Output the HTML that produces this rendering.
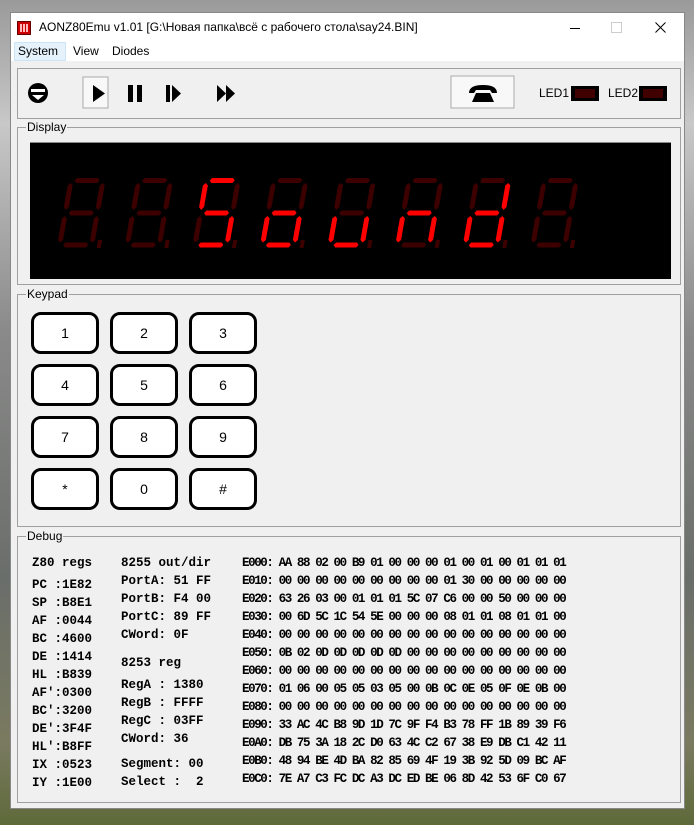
<!DOCTYPE html>
<html><head><meta charset="utf-8">
<style>
*{margin:0;padding:0;box-sizing:border-box}
body{width:694px;height:825px;overflow:hidden;position:relative;font-family:"Liberation Sans",sans-serif;
background:linear-gradient(180deg,#9a9a9a 0%,#c8c8c8 15%,#8a8a8a 40%,#6a6e6a 70%,#7a7a60 90%,#5e6a3a 100%);}
.a{position:absolute}
#win{left:10px;top:12px;width:675px;height:797px;background:#f0f0f0;border:1px solid #888;}
#title{left:0;top:0;width:673px;height:29px;background:#fff;font-size:12px;color:#000}
#menu{left:0;top:29px;width:673px;height:19px;background:#fff;font-size:12px}
.grp{position:absolute;border:1px solid #a0a0a0;}
.grp span.l{position:absolute;top:-8px;left:8px;background:#f0f0f0;font-size:12px;padding:0 1px;line-height:14px}
.key{position:absolute;width:68px;height:42px;border:3px solid #000;border-radius:10px;background:#fff;font-size:14px;text-align:center;line-height:36px;color:#000}
.m{font-family:"Liberation Mono","DejaVu Sans Mono",monospace;font-weight:bold;font-size:12.5px;color:#000;white-space:pre;position:absolute;line-height:18px}
.hex{font-size:12.5px;letter-spacing:-1.4px}
</style></head><body>
<div id="win" class="a">
 <div id="title" class="a">
  <div class="a" style="left:6px;top:8px;width:14px;height:14px;background:#c00;border:1px solid #600"></div>
  <div class="a" style="left:9px;top:11px;width:8px;height:8px;background:repeating-linear-gradient(90deg,#fbb 0 2px,#c00 2px 3px)"></div>
  <div class="a" style="left:28px;top:7px">AONZ80Emu v1.01 [G:\Новая папка\всё с рабочего стола\say24.BIN]</div>
  <div class="a" style="left:559px;top:15px;width:10px;height:1px;background:#000"></div>
  <div class="a" style="left:600px;top:9px;width:11px;height:11px;border:1px solid #ccc"></div>
  <svg class="a" style="left:644px;top:9px" width="11" height="11"><path d="M0.5 0.5L10.5 10.5M10.5 0.5L0.5 10.5" stroke="#000" stroke-width="1"/></svg>
 </div>
 <div id="menu" class="a">
  <div class="a" style="left:3px;top:0;width:52px;height:19px;background:#e5f1fb;border:1px solid #cce4f7"></div>
  <div class="a" style="left:7px;top:2px">System</div>
  <div class="a" style="left:62px;top:2px">View</div>
  <div class="a" style="left:101px;top:2px">Diodes</div>
 </div>
 <div class="grp" style="left:6px;top:55px;width:664px;height:51px">
  <svg class="a" style="left:0;top:0" width="664" height="51">
   <circle cx="20" cy="24" r="10" fill="#000"/>
   <rect x="13" y="20" width="14" height="3" fill="#fff"/>
   <polygon points="14,26 26,26 20,31" fill="#fff"/>
   <rect x="65" y="8" width="25" height="31" fill="#f8f8f8" stroke="#aaa"/>
   <polygon points="75,16 75,33 87,24.5" fill="#000"/>
   <rect x="110" y="16" width="5" height="17" fill="#000"/><rect x="119" y="16" width="5" height="17" fill="#000"/>
   <rect x="148" y="16" width="4" height="17" fill="#000"/><polygon points="154,16 154,33 163,24.5" fill="#000"/>
   <polygon points="199,16 199,33 208,24.5" fill="#000"/><polygon points="208,16 208,33 217,24.5" fill="#000"/>
   <rect x="433" y="7" width="63" height="32" fill="#f8f8f8" stroke="#aaa"/>
   <path d="M451 24 Q451 16 465 16 Q479 16 479 24 L474 24 L472 21 L458 21 L456 24 Z" fill="#000"/>
   <path d="M458 24 L472 24 L476 33 L454 33 Z" fill="#000"/>
  </svg>
  <div class="a" style="left:521px;top:17px;font-size:12px">LED1</div>
  <div class="a" style="left:553px;top:17px;width:28px;height:15px;background:#000;padding:3px 4px"><div style="width:20px;height:9px;background:#400000"></div></div>
  <div class="a" style="left:590px;top:17px;font-size:12px">LED2</div>
  <div class="a" style="left:621px;top:17px;width:28px;height:15px;background:#000;padding:3px 4px"><div style="width:20px;height:9px;background:#400000"></div></div>
 </div>
 <div class="grp" style="left:6px;top:114px;width:664px;height:158px"><span class="l">Display</span>
  <div class="a" style="left:12px;top:14px;width:641px;height:137px;background:#000;border-top:1px solid #888">
   <svg width="641" height="137" viewBox="0 0 641 137"><g id="digits"></g></svg>
  </div>
 </div>
 <div class="grp" style="left:6px;top:281px;width:664px;height:233px"><span class="l">Keypad</span>
  <div class="key" style="left:13px;top:17px">1</div><div class="key" style="left:92px;top:17px">2</div><div class="key" style="left:171px;top:17px">3</div>
  <div class="key" style="left:13px;top:69px">4</div><div class="key" style="left:92px;top:69px">5</div><div class="key" style="left:171px;top:69px">6</div>
  <div class="key" style="left:13px;top:121px">7</div><div class="key" style="left:92px;top:121px">8</div><div class="key" style="left:171px;top:121px">9</div>
  <div class="key" style="left:13px;top:173px">*</div><div class="key" style="left:92px;top:173px">0</div><div class="key" style="left:171px;top:173px">#</div>
 </div>
 <div class="grp" style="left:6px;top:523px;width:664px;height:267px"><span class="l">Debug</span>
  <div class="m" style="left:14px;top:17px">Z80 regs</div>
  <div class="m" style="left:14px;top:39px">PC :1E82
SP :B8E1
AF :0044
BC :4600
DE :1414
HL :B839
AF':0300
BC':3200
DE':3F4F
HL':B8FF
IX :0523
IY :1E00</div>
  <div class="m" style="left:103px;top:17px">8255 out/dir
PortA: 51 FF
PortB: F4 00
PortC: 89 FF
CWord: 0F</div>
  <div class="m" style="left:103px;top:117px">8253 reg</div>
  <div class="m" style="left:103px;top:139px">RegA : 1380
RegB : FFFF
RegC : 03FF
CWord: 36</div>
  <div class="m" style="left:103px;top:218px">Segment: 00
Select :  2</div>
  <div class="m hex" style="left:224px;top:17px">E000: AA 88 02 00 B9 01 00 00 00 01 00 01 00 01 01 01
E010: 00 00 00 00 00 00 00 00 00 01 30 00 00 00 00 00
E020: 63 26 03 00 01 01 01 5C 07 C6 00 00 50 00 00 00
E030: 00 6D 5C 1C 54 5E 00 00 00 08 01 01 08 01 01 00
E040: 00 00 00 00 00 00 00 00 00 00 00 00 00 00 00 00
E050: 0B 02 0D 0D 0D 0D 0D 00 00 00 00 00 00 00 00 00
E060: 00 00 00 00 00 00 00 00 00 00 00 00 00 00 00 00
E070: 01 06 00 05 05 03 05 00 0B 0C 0E 05 0F 0E 0B 00
E080: 00 00 00 00 00 00 00 00 00 00 00 00 00 00 00 00
E090: 33 AC 4C B8 9D 1D 7C 9F F4 B3 78 FF 1B 89 39 F6
E0A0: DB 75 3A 18 2C D0 63 4C C2 67 38 E9 DB C1 42 11
E0B0: 48 94 BE 4D BA 82 85 69 4F 19 3B 92 5D 09 BC AF
E0C0: 7E A7 C3 FC DC A3 DC ED BE 06 8D 42 53 6F C0 67</div>
 </div>
</div>
<script>
(function(){
var segs={
a:"9,0 30,0 32,2.5 30,5 9,5 7,2.5",
b:"35.5,5 38,7.5 38,29 35.5,32 33,29 33,7.5",
c:"35.5,38 38,40.5 38,62 35.5,64.5 33,62 33,40.5",
d:"9,64.5 30,64.5 32,67 30,69.5 9,69.5 7,67",
e:"3.5,38 6,40.5 6,62 3.5,64.5 1,62 1,40.5",
f:"3.5,5 6,7.5 6,29 3.5,32 1,29 1,7.5",
g:"9,32.5 30,32.5 32,35 30,37.5 9,37.5 7,35",
p:"41,62 45,62 45,70 41,70"};
var on=["","","afgcd","gecd","ecd","egc","bcdeg",""];
var g=document.getElementById("digits"),h="";
for(var i=0;i<8;i++){
 var x=38+i*67.6;
 h+='<g transform="translate('+x+',35) skewX(-10)">';
 for(var k in segs){var lit=on[i].indexOf(k)>=0;
  h+='<polygon points="'+segs[k]+'" fill="'+(lit?'#ff0000':'#3c0000')+'"/>';}
 h+='</g>';
}
g.innerHTML=h;
})();
</script>
</body></html>
